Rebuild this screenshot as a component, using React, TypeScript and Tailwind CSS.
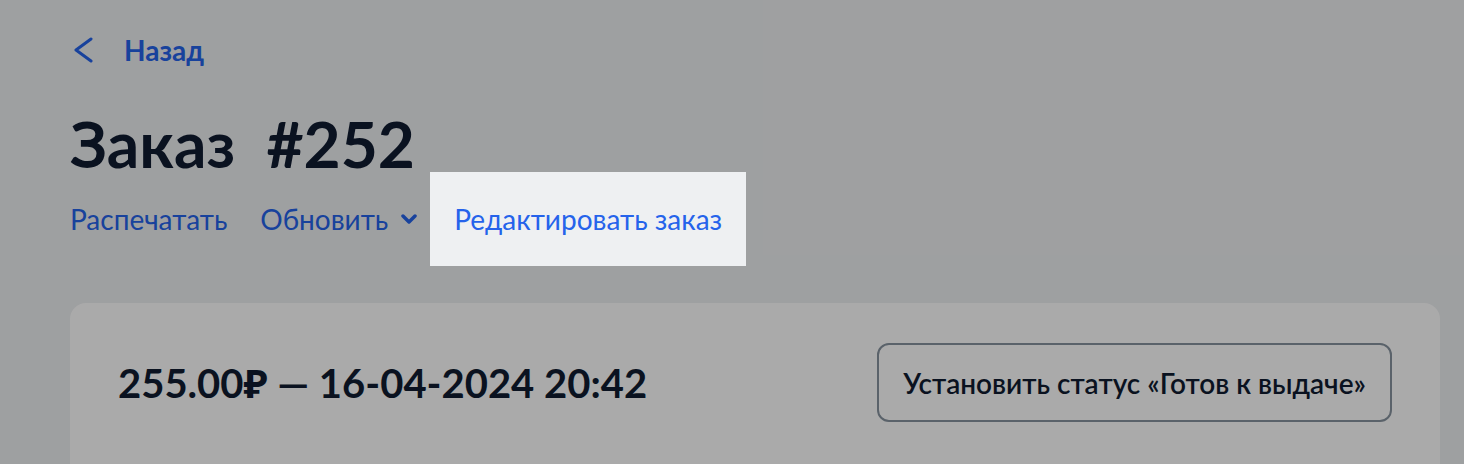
const actions = [
  { label: "Распечатать", dropdown: false },
  { label: "Обновить", dropdown: true },
];

export default function App() {
  return (
    <div className="relative h-[464px] overflow-hidden bg-[#eef0f2] font-['Lato','Noto_Sans',sans-serif] text-[#0f1b30]">
      <div className="pl-[70px] pr-6 pt-[30px]">
        <a href="#" className="flex h-10 items-center text-[#2563eb]">
          <svg viewBox="0 0 20 26" className="ml-[3px] h-[26px] w-5" fill="none" stroke="currentColor" strokeWidth={3}>
            <polyline points="18,2 3,13 18,24" strokeLinecap="round" strokeLinejoin="round" />
          </svg>
          <span className="ml-[31px] text-[28px] font-bold">Назад</span>
        </a>

        <h1 className="mt-[38px] text-[64px] font-bold leading-[72px] whitespace-pre">Заказ  #252</h1>

        <div className="-mt-[8px] flex items-center">
          {actions.map((item) => (
            <a key={item.label} href="#" className="mr-[33px] flex items-center text-[28px] text-[#2563eb]">
              {item.label}
              {item.dropdown ? (
                <svg viewBox="0 0 16 10" className="ml-[13px] h-[10px] w-4" fill="none" stroke="currentColor" strokeWidth={3.5}>
                  <polyline points="2,2 8,8 14,2" strokeLinecap="round" strokeLinejoin="round" />
                </svg>
              ) : null}
            </a>
          ))}
          <a
            href="#"
            className="relative z-20 -ml-[20px] bg-[#eef0f2] px-6 py-[31px] text-[28px] leading-8 text-[#2563eb]"
          >
            Редактировать заказ
          </a>
        </div>

        <div className="mt-[37px] rounded-2xl bg-white px-12 pb-20 pt-10">
          <div className="flex items-center justify-between">
            <p className="text-[40px] font-bold">255.00₽ — 16-04-2024 20:42</p>
            <button className="h-[79px] rounded-xl border-2 border-[#87939f] px-6 text-[28px] font-semibold">
              Установить статус «Готов к выдаче»
            </button>
          </div>
        </div>
      </div>

      <div className="absolute inset-0 z-10 bg-black/[0.333]" />
    </div>
  );
}
